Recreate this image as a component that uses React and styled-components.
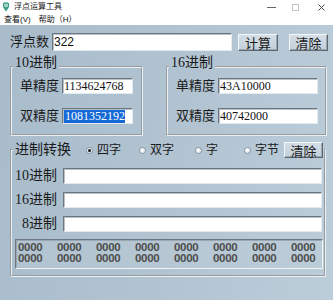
import React from "react";
import styled, { createGlobalStyle } from "styled-components";

const Global = createGlobalStyle`
  html, body { margin: 0; padding: 0; width: 333px; height: 300px; overflow: hidden; }
  body { font-family: "Liberation Serif", "Noto Sans CJK SC", serif; }
  * { box-sizing: border-box; }
`;

const CJK = `"Liberation Serif", "Noto Sans CJK SC", serif`;
const SANS = `"Liberation Sans", "Noto Sans CJK SC", sans-serif`;

const Window = styled.div`
  width: 333px;
  height: 300px;
  display: flex;
  flex-direction: column;
  background: #fff;
`;

const TitleBar = styled.div`
  height: 14px;
  display: flex;
  align-items: center;
  padding-left: 2px;
  background: #fff;
`;

const Title = styled.span`
  font-family: ${SANS};
  font-size: 8px;
  line-height: 14px;
  color: #222;
  margin-left: 4px;
`;

const Controls = styled.div`
  margin-left: auto;
  display: flex;
  height: 14px;
`;

const CtrlBtn = styled.div`
  width: ${(p) => p.$w}px;
  height: 14px;
  display: flex;
  align-items: center;
  justify-content: center;
`;

const MenuBar = styled.div`
  height: 11px;
  display: flex;
  align-items: center;
  gap: 8px;
  padding-left: 4px;
  background: #fff;
`;

const MenuItem = styled.span`
  font-family: ${SANS};
  font-size: 8px;
  line-height: 11px;
  color: #111;
`;

const Body = styled.div`
  flex: 1;
  display: flex;
  flex-direction: column;
  padding: 8px 6px 0 10px;
  background: linear-gradient(100deg, #a9bccb 0%, #b2c4d2 55%, #bccdda 100%);
`;

const TopRow = styled.div`
  display: flex;
  align-items: center;
  height: 18px;
`;

const Label = styled.span`
  font-family: ${CJK};
  font-size: ${(p) => p.$size || 13}px;
  line-height: 16px;
  color: #1a1a1a;
  width: ${(p) => (p.$w ? `${p.$w}px` : "auto")};
  text-align: ${(p) => p.$align || "left"};
  white-space: nowrap;
  flex-shrink: 0;
`;

const TextBox = styled.div`
  width: ${(p) => p.$w}px;
  height: ${(p) => p.$h || 16}px;
  margin-left: ${(p) => p.$ml || 0}px;
  background: #fff;
  border-style: solid;
  border-width: 1px;
  border-color: #6c7680 #e4ebf0 #e4ebf0 #6c7680;
  box-shadow: inset 1px 1px 0 #b9c0c6;
  font-family: ${(p) => (p.$sans ? SANS : CJK)};
  font-size: 12px;
  line-height: ${(p) => (p.$h || 16) - 2}px;
  padding-left: 1px;
  color: #111;
  white-space: nowrap;
  overflow: hidden;
  flex-shrink: 0;
`;

const Selected = styled.span`
  background: #1469d6;
  color: #fff;
  display: inline-block;
  padding-left: 1px;
  line-height: 13px;
`;

const Button = styled.div`
  width: ${(p) => p.$w}px;
  height: ${(p) => p.$h || 17}px;
  margin-left: ${(p) => (p.$auto ? "auto" : `${p.$ml || 0}px`)};
  display: flex;
  align-items: center;
  justify-content: center;
  background: linear-gradient(#d3dde5, #c4d0da);
  border-style: solid;
  border-width: 1px;
  border-color: #f4f7f9 #5f6870 #5f6870 #f4f7f9;
  box-shadow: inset -1px -1px 0 #9aa6b0;
  font-family: ${CJK};
  font-size: 13px;
  color: #1a1a1a;
  flex-shrink: 0;
`;

const GroupsRow = styled.div`
  display: flex;
  gap: 23px;
  margin-top: 5px;
`;

const Group = styled.fieldset`
  margin: ${(p) => p.$mt ?? 0}px 0 0 0;
  width: ${(p) => p.$w}px;
  height: ${(p) => (p.$h ? `${p.$h}px` : "auto")};
  border: 2px groove #e9eff3;
  padding: 0 6px ${(p) => p.$pb ?? 8}px ${(p) => p.$pl ?? 8}px;
  min-width: 0;
  display: flex;
  flex-direction: column;
  gap: ${(p) => p.$gap ?? 14}px;
`;

const Legend = styled.legend`
  margin-left: -7px;
  padding: 0 2px;
  height: 22px;
  font-family: ${CJK};
  font-size: 14px;
  line-height: 14px;
  color: #1a1a1a;
`;

const WideLegend = styled.legend`
  margin-left: -2px;
  padding: 0 1px 0 2px;
  height: 18px;
  width: 311px;
`;

const HeaderRow = styled.div`
  display: flex;
  align-items: center;
  height: 18px;
`;

const FieldRow = styled.div`
  display: flex;
  align-items: center;
  height: 16px;
  margin-top: ${(p) => p.$mt ?? 0}px;
`;

const Radio = styled.div`
  display: flex;
  align-items: center;
  gap: 4px;
  width: ${(p) => (p.$w ? `${p.$w}px` : "auto")};
  flex-shrink: 0;
`;

const RadioCircle = styled.span`
  width: 7px;
  height: 7px;
  border-radius: 50%;
  border: 1px solid #8a96a0;
  background: radial-gradient(circle at 40% 40%, #ffffff, #dde4ea);
  display: flex;
  align-items: center;
  justify-content: center;
  &::after {
    content: "";
    width: 3px;
    height: 3px;
    border-radius: 50%;
    background: ${(p) => (p.$on ? "#111" : "transparent")};
  }
`;

const RadioText = styled.span`
  font-family: ${CJK};
  font-size: 12px;
  line-height: 14px;
  color: #1a1a1a;
`;

const Output = styled.div`
  margin-top: 7px;
  width: 308px;
  height: 30px;
  border-style: solid;
  border-width: 1px;
  border-color: #6c7680 #eef3f6 #eef3f6 #6c7680;
  box-shadow: inset 1px 1px 0 #9ba8b3;
  padding: 2px 0 0 2px;
  display: grid;
  grid-template-columns: repeat(8, 39px);
  grid-auto-rows: 11px;
  background: rgba(190, 205, 216, 0.35);
`;

const Cell = styled.span`
  font-family: ${SANS};
  font-size: 11.5px;
  line-height: 11px;
  color: #4d4d4d;
  font-weight: 600;
  letter-spacing: -0.3px;
`;

function AppIcon() {
  return (
    <svg width="8" height="10" viewBox="0 0 8 10">
      <path d="M1 1 Q4 -0.5 7 1 L7 5 Q4 9.5 4 9.5 Q4 9.5 1 5 Z" fill="#3e9a86" />
      <path d="M2 2 Q4 1 6 2 L6 4.5 Q4 6 2 4.5 Z" fill="#9fd8c4" />
    </svg>
  );
}

const LeftRow = ({ label, value, selected, w }) => (
  <FieldRow>
    <Label $w={42}>{label}</Label>
    <TextBox $w={w}>{selected ? <Selected>{value}</Selected> : value}</TextBox>
  </FieldRow>
);

const ConvRow = ({ label, mt }) => (
  <FieldRow $mt={mt}>
    <Label $size={14} $w={42} $align="right">{label}</Label>
    <TextBox $w={259} $ml={6} />
  </FieldRow>
);

export default function App() {
  const cells = Array.from({ length: 16 }, (_, i) => i);
  return (
    <>
      <Global />
      <Window>
        <TitleBar>
          <AppIcon />
          <Title>浮点运算工具</Title>
          <Controls>
            <CtrlBtn $w={22}>
              <svg width="9" height="3" viewBox="0 0 9 3"><rect x="0" y="1" width="9" height="1" fill="#666" /></svg>
            </CtrlBtn>
            <CtrlBtn $w={27}>
              <svg width="7" height="7" viewBox="0 0 7 7"><rect x="0.5" y="0.5" width="6" height="6" fill="none" stroke="#c4c4c4" /></svg>
            </CtrlBtn>
            <CtrlBtn $w={24}>
              <svg width="7" height="7" viewBox="0 0 7 7"><path d="M0.5 0.5 L6.5 6.5 M6.5 0.5 L0.5 6.5" stroke="#444" strokeWidth="1" /></svg>
            </CtrlBtn>
          </Controls>
        </TitleBar>
        <MenuBar>
          <MenuItem>查看(V)</MenuItem>
          <MenuItem>帮助（H）</MenuItem>
        </MenuBar>
        <Body>
          <TopRow>
            <Label $w={42}>浮点数</Label>
            <TextBox $w={180} $h={18} $sans>322</TextBox>
            <Button $w={40} $ml={6}>计算</Button>
            <Button $w={39} $ml={11}>清除</Button>
          </TopRow>
          <GroupsRow>
            <Group $w={134} $h={80}>
              <Legend>10进制</Legend>
              <LeftRow label="单精度" value="1134624768" w={71} />
              <LeftRow label="双精度" value="1081352192" w={71} selected />
            </Group>
            <Group $w={162} $h={80}>
              <Legend>16进制</Legend>
              <LeftRow label="单精度" value="43A10000" w={100} />
              <LeftRow label="双精度" value="40742000" w={100} />
            </Group>
          </GroupsRow>
          <Group $w={316} $mt={5} $pl={3} $pb={6} $gap={0}>
            <WideLegend>
              <HeaderRow>
                <Label $size={14} $w={71}>进制转换</Label>
                <Radio $w={53}><RadioCircle $on /><RadioText>四字</RadioText></Radio>
                <Radio $w={56}><RadioCircle /><RadioText>双字</RadioText></Radio>
                <Radio $w={49}><RadioCircle /><RadioText>字</RadioText></Radio>
                <Radio><RadioCircle /><RadioText>字节</RadioText></Radio>
                <Button $w={39} $h={16} $auto>清除</Button>
              </HeaderRow>
            </WideLegend>
            <ConvRow label="10进制" mt={9} />
            <ConvRow label="16进制" mt={8} />
            <ConvRow label="8进制" mt={8} />
            <Output>
              {cells.map((i) => (
                <Cell key={i}>0000</Cell>
              ))}
            </Output>
          </Group>
        </Body>
      </Window>
    </>
  );
}
